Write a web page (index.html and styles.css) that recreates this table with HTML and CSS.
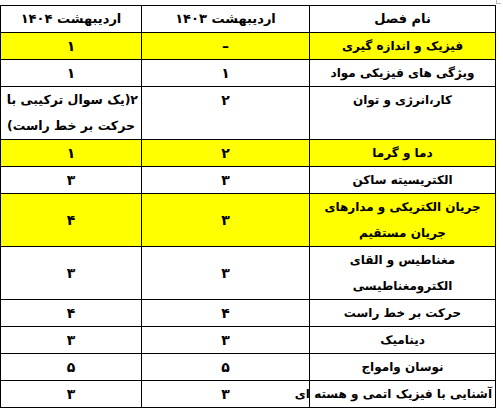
FILE: index.html
```html
<!DOCTYPE html>
<html lang="fa" dir="rtl">
<head>
<meta charset="utf-8">
<title>جدول بارم فصل‌ها</title>
<link rel="stylesheet" href="styles.css">
</head>
<body>
<div class="page">
  <span class="mark mark-tr"></span>
  <table class="grid">
    <colgroup>
      <col class="c-name">
      <col class="c-1403">
      <col class="c-1404">
    </colgroup>
    <tr class="head">
      <td>نام فصل</td>
      <td>اردیبهشت ۱۴۰۳</td>
      <td>اردیبهشت ۱۴۰۴</td>
    </tr>
    <tr class="hl">
      <td>فیزیک و اندازه گیری</td>
      <td>–</td>
      <td>۱</td>
    </tr>
    <tr>
      <td>ویژگی های فیزیکی مواد</td>
      <td>۱</td>
      <td>۱</td>
    </tr>
    <tr class="top">
      <td>کار،انرژی و توان</td>
      <td>۲</td>
      <td class="left">۲(یک سوال ترکیبی با<br>حرکت بر خط راست)</td>
    </tr>
    <tr class="hl">
      <td>دما و گرما</td>
      <td>۲</td>
      <td>۱</td>
    </tr>
    <tr>
      <td>الکتریسیته ساکن</td>
      <td>۳</td>
      <td>۳</td>
    </tr>
    <tr class="hl">
      <td>جریان الکتریکی و مدارهای<br>جریان مستقیم</td>
      <td>۳</td>
      <td>۴</td>
    </tr>
    <tr>
      <td>مغناطیس و القای<br>الکترومغناطیسی</td>
      <td>۳</td>
      <td>۳</td>
    </tr>
    <tr>
      <td>حرکت بر خط راست</td>
      <td>۴</td>
      <td>۴</td>
    </tr>
    <tr>
      <td>دینامیک</td>
      <td>۳</td>
      <td>۳</td>
    </tr>
    <tr>
      <td>نوسان وامواج</td>
      <td>۵</td>
      <td>۵</td>
    </tr>
    <tr>
      <td>آشنایی با فیزیک اتمی و هسته ای</td>
      <td>۳</td>
      <td>۳</td>
    </tr>
  </table>
  <span class="mark mark-bl"></span>
</div>
</body>
</html>
```

FILE: styles.css
```css
html, body {
  margin: 0;
  padding: 0;
  background: #ffffff;
}

body {
  font-family: "DejaVu Sans", sans-serif;
  color: #000000;
}

.page {
  position: relative;
  padding: 5px 7px 0 2px;
}

.grid {
  border-collapse: collapse;
  table-layout: fixed;
  width: 495px;
}

.c-name { width: 186px; }
.c-1403 { width: 168px; }
.c-1404 { width: 141px; }

.grid td {
  border: 1px solid #000000;
  padding: 0 3px;
  height: 26px;
  line-height: 26px;
  font-size: 12px;
  font-weight: bold;
  text-align: center;
  vertical-align: middle;
  white-space: nowrap;
}

/* score columns: digits are set a little larger */
.grid td + td {
  font-size: 14px;
}

.grid .head td {
  font-size: 13px;
}

.grid .hl td {
  background: #ffff00;
}

.grid .top td {
  vertical-align: top;
}

.grid td.left {
  text-align: left;
  padding-left: 6px;
  font-size: 12.5px;
}

.mark {
  position: absolute;
  display: block;
  border: 1px solid #b8b8b8;
}

.mark-tr {
  top: 0;
  left: 496px;
  width: 4px;
  height: 3px;
  border-top: none;
  border-right: none;
}

.mark-bl {
  left: 1px;
  bottom: -6px;
  width: 4px;
  height: 4px;
}
```
